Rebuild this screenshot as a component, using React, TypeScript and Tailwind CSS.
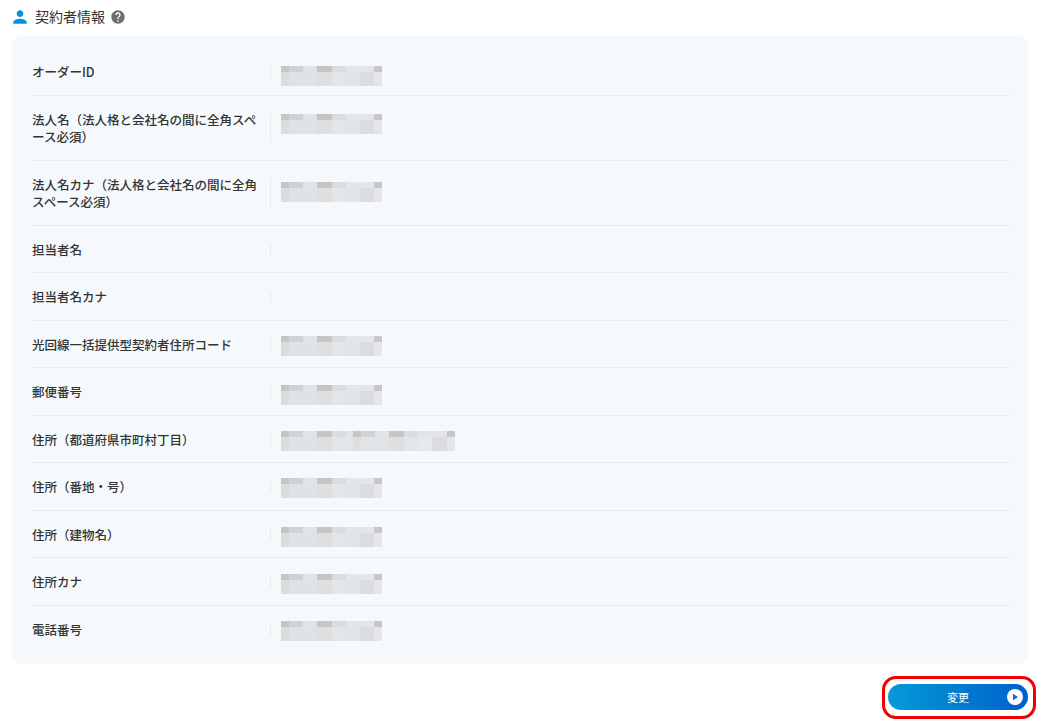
const shortTop = [
  'w-[8px] bg-[#c5c5c4]',
  'w-[14px] bg-[#ced3da]',
  'w-[14px] bg-[#e1e4e7]',
  'w-[14.5px] bg-[#c8c4c2]',
  'w-[14px] bg-[#d8dce3]',
  'w-[28.5px] bg-[#e3e6e9]',
  'w-[8px] bg-[#c5c7cb]',
]
const shortBottom = [
  'w-[8px] bg-[#dcdcdd]',
  'w-[28px] bg-[#e0e3e6]',
  'w-[14.5px] bg-[#e0dfe0]',
  'w-[14px] bg-[#e3e6e9]',
  'w-[14px] bg-[#e2e5e7]',
  'w-[14.5px] bg-[#dcdcdf]',
  'w-[8px] bg-[#e4e6ea]',
]
const longTop = [
  'w-[8px] bg-[#c5c5c4]',
  'w-[14px] bg-[#ced3da]',
  'w-[14px] bg-[#e1e4e7]',
  'w-[14.5px] bg-[#c8c4c2]',
  'w-[14px] bg-[#d8dce3]',
  'w-[7.5px] bg-[#e3e6e9]',
  'w-[8px] bg-[#c8c4c2]',
  'w-[14px] bg-[#ced3da]',
  'w-[14px] bg-[#e1e4e7]',
  'w-[14.5px] bg-[#c8c4c2]',
  'w-[14px] bg-[#d8dce3]',
  'w-[29.5px] bg-[#e3e6e9]',
  'w-[8px] bg-[#c5c7cb]',
]
const longBottom = [
  'w-[8px] bg-[#dcdcdd]',
  'w-[28px] bg-[#e0e3e6]',
  'w-[14.5px] bg-[#e0dfe0]',
  'w-[14px] bg-[#e3e6e9]',
  'w-[7.5px] bg-[#e3e6e9]',
  'w-[8px] bg-[#e0dfe0]',
  'w-[28px] bg-[#e1e4e7]',
  'w-[14.5px] bg-[#e0dfe0]',
  'w-[14px] bg-[#e3e6e9]',
  'w-[14.5px] bg-[#e6e9eb]',
  'w-[15px] bg-[#dcdcdf]',
  'w-[8px] bg-[#e4e6ea]',
]

const rows = [
  { label: 'オーダーID', value: 'short', offset: 'mt-[3px]' },
  { label: '法人名（法人格と会社名の間に全角スペース必須）', value: 'short', offset: 'mt-[3.5px]' },
  { label: '法人名カナ（法人格と会社名の間に全角スペース必須）', value: 'short', offset: 'mt-[6px]' },
  { label: '担当者名' },
  { label: '担当者名カナ' },
  { label: '光回線一括提供型契約者住所コード', value: 'short', offset: 'mt-0' },
  { label: '郵便番号', value: 'short', offset: 'mt-[1.5px]' },
  { label: '住所（都道府県市町村丁目）', value: 'long', offset: 'mt-[0.5px]' },
  { label: '住所（番地・号）', value: 'short', offset: 'mt-0' },
  { label: '住所（建物名）', value: 'short', offset: 'mt-px' },
  { label: '住所カナ', value: 'short', offset: 'mt-px' },
  { label: '電話番号', value: 'short', offset: 'mt-0' },
]

function Mosaic({ long, offset }: { long: boolean; offset?: string }) {
  const top = long ? longTop : shortTop
  const bottom = long ? longBottom : shortBottom
  return (
    <div className={`${offset} blur-[0.4px]`}>
      <div className="flex h-[6px]">
        {top.map((c, i) => (
          <div key={i} className={c} />
        ))}
      </div>
      <div className="flex h-[14px]">
        {bottom.map((c, i) => (
          <div key={i} className={c} />
        ))}
      </div>
    </div>
  )
}

export default function App() {
  return (
    <div className="relative h-[720px] w-[1044px] overflow-hidden bg-white pl-3 pr-4 pt-[6px] font-['Noto_Sans_CJK_JP','Noto_Sans',sans-serif] text-[#333]">
      <div className="mb-[9px] flex h-[21px] items-center">
        <svg className="ml-[-2px] h-[20px] w-[20px] text-[#0a8fdc]" viewBox="0 0 24 24" fill="currentColor">
          <path d="M12 12c2.21 0 4-1.79 4-4s-1.79-4-4-4-4 1.79-4 4 1.79 4 4 4zm0 2c-2.67 0-8 1.34-8 4v2h16v-2c0-2.66-5.33-4-8-4z" />
        </svg>
        <h2 className="ml-[5px] text-[14px] font-normal leading-[21px]">契約者情報</h2>
        <svg className="ml-[5px] h-[16px] w-[16px] text-[#6e6e6e]" viewBox="0 0 24 24" fill="currentColor">
          <path d="M12 2C6.48 2 2 6.48 2 12s4.48 10 10 10 10-4.48 10-10S17.52 2 12 2zm1 17h-2v-2h2v2zm2.07-7.75l-.9.92C13.45 12.9 13 13.5 13 15h-2v-.5c0-1.1.45-2.1 1.17-2.83l1.24-1.26c.37-.36.59-.86.59-1.41 0-1.1-.9-2-2-2s-2 .9-2 2H8c0-2.21 1.79-4 4-4s4 1.79 4 4c0 .88-.36 1.68-.93 2.25z" />
        </svg>
      </div>

      <div className="rounded-[10px] bg-[#f5f9fc] pb-3 pl-5 pr-[18px] pt-3">
        {rows.map((row, i) => (
          <div
            key={row.label}
            className={`flex pb-[14px] pt-[15px] ${i < rows.length - 1 ? 'border-b border-[#e6eaee]' : ''}`}
          >
            <div className="w-[228px] shrink-0 text-[12.5px] font-medium leading-[17.5px]">{row.label}</div>
            <div className="my-[2.5px] ml-[10px] w-px shrink-0 bg-[#e6eaee]" />
            <div className="ml-[10px] h-0">
              {row.value && <Mosaic long={row.value === 'long'} offset={row.offset} />}
            </div>
          </div>
        ))}
      </div>

      <div className="mt-5 flex justify-end">
        <button className="relative flex h-[26px] w-[140px] items-center justify-center rounded-full bg-gradient-to-r from-[#0a9ad6] to-[#005fcc] text-[11px] text-white">
          変更
          <svg className="absolute right-[5px] top-[5px] h-4 w-4" viewBox="0 0 16 16">
            <circle cx="8" cy="8" r="8" fill="#fff" />
            <path d="M6 4.8 L11 8 L6 11.2 Z" fill="#0a6fd0" />
          </svg>
          <span className="absolute -bottom-[9px] -left-[6px] -right-[8px] -top-[8px] rounded-[14px] border-[3px] border-[#f00000]" />
        </button>
      </div>
    </div>
  )
}
